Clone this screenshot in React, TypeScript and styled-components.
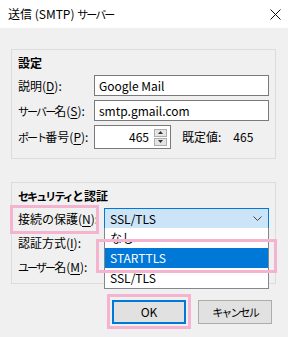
import React from "react";
import styled, { createGlobalStyle } from "styled-components";

const GlobalStyle = createGlobalStyle`
  html, body {
    margin: 0;
    padding: 0;
    background: #f0f0f0;
  }
  body {
    font-family: "Noto Sans CJK JP", "Noto Sans", sans-serif;
    font-size: 12px;
    line-height: 16px;
    color: #000;
  }
`;

const PINK = "#f4b4cf";

const Dialog = styled.div`
  width: 288px;
  height: 337px;
  background: #f0f0f0;
  display: flex;
  flex-direction: column;
  overflow: hidden;
`;

const TitleBar = styled.div`
  height: 28px;
  background: #fff;
  display: flex;
  align-items: center;
  justify-content: space-between;
  padding: 0 7px 0 8px;
`;

const Title = styled.span`
  font-size: 12px;
`;

// katakana in the Windows UI font is narrower than the kanji
const Kana = styled.span`
  font-size: 11px;
  letter-spacing: -1.9px;
`;

const Body = styled.div`
  padding: 21px 12px 0 11px;
  display: flex;
  flex-direction: column;
`;

const GroupBox = styled.div<{ $gapTop?: number; $padBottom: number }>`
  border: 1px solid #dcdcdc;
  padding: 5px 6px ${(p) => p.$padBottom}px 6px;
  margin-top: ${(p) => p.$gapTop ?? 0}px;
  display: flex;
  flex-direction: column;
`;

const Heading = styled.div`
  font-weight: 600;
  margin-bottom: 4px;
`;

const Rows = styled.div<{ $gap: number }>`
  display: flex;
  flex-direction: column;
  gap: ${(p) => p.$gap}px;
`;

const Row = styled.div`
  display: flex;
  align-items: center;
`;

const Label = styled.span<{ $width: number; $marked?: boolean }>`
  position: relative;
  flex: none;
  width: ${(p) => p.$width}px;
  white-space: nowrap;
  u {
    text-decoration: underline;
    text-underline-offset: 2px;
  }
  &::after {
    content: "";
    display: ${(p) => (p.$marked ? "block" : "none")};
    position: absolute;
    left: -8px;
    right: 5px;
    top: -6px;
    bottom: -7px;
    border: 3px solid ${PINK};
  }
`;

const TextField = styled.div`
  flex: 1;
  height: 21px;
  box-sizing: border-box;
  border: 1px solid #7a7a7a;
  background: #fff;
  padding: 0 4px;
  display: flex;
  align-items: center;
`;

const Spinner = styled.div`
  width: 77px;
  height: 24px;
  box-sizing: border-box;
  border: 1px solid #7a7a7a;
  background: #fff;
  display: flex;
  align-items: center;
  justify-content: flex-end;
  gap: 5px;
  padding-right: 3px;
`;

const SpinButtons = styled.div`
  display: flex;
  flex-direction: column;
  gap: 1px;
`;

const SpinButton = styled.div`
  width: 13px;
  height: 8px;
  box-sizing: border-box;
  border: 1px solid #adadad;
  background: #e5e5e5;
  display: flex;
  align-items: center;
  justify-content: center;
`;

const DefaultValue = styled.span`
  margin-left: 11px;
  display: flex;
  gap: 12px;
`;

const Combo = styled.div<{ $active?: boolean }>`
  position: relative;
  flex: 1;
  height: 21px;
  box-sizing: border-box;
  border: 1px solid ${(p) => (p.$active ? "#0078d7" : "#7a7a7a")};
  background: ${(p) => (p.$active ? "#cce4f7" : "#e5e5e5")};
  padding: 0 6px 0 5px;
  display: flex;
  align-items: center;
  justify-content: space-between;
`;

const DropList = styled.div`
  position: absolute;
  z-index: 2;
  top: 100%;
  left: -1px;
  right: -1px;
  background: #fff;
  border: 1px solid #828790;
  border-top: none;
  display: flex;
  flex-direction: column;
`;

const Option = styled.div<{ $selected?: boolean; $marked?: boolean }>`
  position: relative;
  height: 20px;
  padding-left: 5px;
  display: flex;
  align-items: center;
  background: ${(p) => (p.$selected ? "#0078d7" : "transparent")};
  color: ${(p) => (p.$selected ? "#fff" : "#000")};
  &::after {
    content: "";
    display: ${(p) => (p.$marked ? "block" : "none")};
    position: absolute;
    left: -9px;
    right: -9px;
    top: -9px;
    bottom: -5px;
    border: 3px solid ${PINK};
  }
`;

const ButtonRow = styled.div`
  display: flex;
  justify-content: flex-end;
  gap: 12px;
  margin-top: 16px;
  padding-right: 4px;
`;

const Button = styled.div<{ $default?: boolean; $marked?: boolean }>`
  position: relative;
  width: 74px;
  height: 24px;
  box-sizing: border-box;
  background: #e1e1e1;
  border: ${(p) => (p.$default ? "2px solid #0078d7" : "1px solid #adadad")};
  display: flex;
  align-items: center;
  justify-content: center;
  &::after {
    content: "";
    display: ${(p) => (p.$marked ? "block" : "none")};
    position: absolute;
    left: -${(p) => (p.$default ? 7 : 6)}px;
    right: -7px;
    top: -8px;
    bottom: -7px;
    border: 3px solid ${PINK};
  }
`;

const CloseIcon = () => (
  <svg width="11" height="11" viewBox="0 0 11 11">
    <path d="M0.5 0.5 L10.5 10.5 M10.5 0.5 L0.5 10.5" stroke="#111" strokeWidth="1" />
  </svg>
);

const Chevron = () => (
  <svg width="9" height="5" viewBox="0 0 9 5">
    <path d="M0.5 0.5 L4.5 4.5 L8.5 0.5" fill="none" stroke="#444" strokeWidth="1" />
  </svg>
);

const Arrow = ({ up }: { up?: boolean }) => (
  <svg width="5" height="3" viewBox="0 0 5 3">
    <path d={up ? "M0 3 L2.5 0 L5 3 Z" : "M0 0 L2.5 3 L5 0 Z"} fill="#333" />
  </svg>
);

export default function App() {
  return (
    <Dialog>
      <GlobalStyle />
      <TitleBar>
        <Title>
          送信 (SMTP) <Kana>サーバー</Kana>
        </Title>
        <CloseIcon />
      </TitleBar>
      <Body>
        <GroupBox $padBottom={9}>
          <Heading>設定</Heading>
          <Rows $gap={4}>
            <Row>
              <Label $width={76}>
                説明(<u>D</u>):
              </Label>
              <TextField>Google Mail</TextField>
            </Row>
            <Row>
              <Label $width={76}>
                <Kana>サーバー</Kana>名(<u>S</u>):
              </Label>
              <TextField>smtp.gmail.com</TextField>
            </Row>
            <Row>
              <Label $width={76}>
                <Kana>ポート</Kana>番号(<u>P</u>):
              </Label>
              <Spinner>
                <span>465</span>
                <SpinButtons>
                  <SpinButton>
                    <Arrow up />
                  </SpinButton>
                  <SpinButton>
                    <Arrow />
                  </SpinButton>
                </SpinButtons>
              </Spinner>
              <DefaultValue>
                <span>既定値:</span>
                <span>465</span>
              </DefaultValue>
            </Row>
          </Rows>
        </GroupBox>

        <GroupBox $gapTop={23} $padBottom={6}>
          <Heading>
            <Kana>セキュリティ</Kana>と認証
          </Heading>
          <Rows $gap={3}>
            <Row>
              <Label $width={86} $marked>
                接続の保護(<u>N</u>):
              </Label>
              <Combo $active>
                <span>SSL/TLS</span>
                <Chevron />
                <DropList>
                  <Option>なし</Option>
                  <Option $selected $marked>
                    STARTTLS
                  </Option>
                  <Option>SSL/TLS</Option>
                </DropList>
              </Combo>
            </Row>
            <Row>
              <Label $width={86}>
                認証方式(<u>I</u>):
              </Label>
              <Combo />
            </Row>
            <Row>
              <Label $width={86}>
                <Kana>ユーザー</Kana>名(<u>M</u>):
              </Label>
              <TextField />
            </Row>
          </Rows>
        </GroupBox>

        <ButtonRow>
          <Button $default $marked>
            OK
          </Button>
          <Button>
            <Kana>キャンセル</Kana>
          </Button>
        </ButtonRow>
      </Body>
    </Dialog>
  );
}
